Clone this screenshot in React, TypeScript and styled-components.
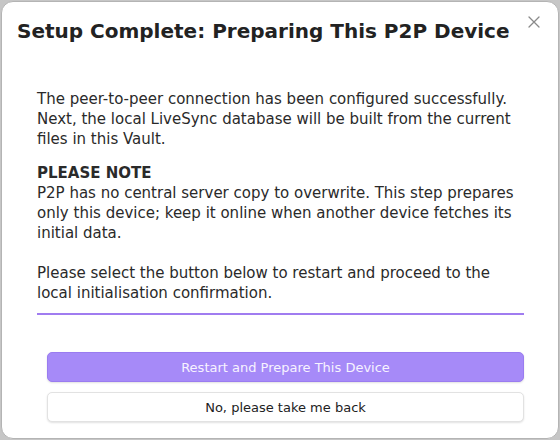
import React from 'react';
import styled, { createGlobalStyle } from 'styled-components';

const GlobalStyle = createGlobalStyle`
	* {
		box-sizing: border-box;
	}
	body {
		margin: 0;
		background: #c6c6c6;
		font-family: 'DejaVu Sans', 'Liberation Sans', sans-serif;
	}
`;

const App: React.FC = () => {
	return (
		<>
			<GlobalStyle />
			<Page>
				<Modal>
					<CloseButton aria-label='Close'>
						<svg width='12' height='12' viewBox='0 0 12 12'>
							<path d='M1 1 L11 11 M11 1 L1 11' stroke='#8a8a8a' strokeWidth='1.3' strokeLinecap='round' />
						</svg>
					</CloseButton>
					<Title>Setup Complete: Preparing This P2P Device</Title>
					<Content>
						<Para>
							The peer-to-peer connection has been configured successfully. Next, the local LiveSync database
							will be built from the current files in this Vault.
						</Para>
						<Note>
							<NoteHead>PLEASE NOTE</NoteHead>
							P2P has no central server copy to overwrite. This step prepares only this device; keep it online
							when another device fetches its initial data.
						</Note>
						<Para $last>
							Please select the button below to restart and proceed to the local initialisation confirmation.
						</Para>
						<Divider />
					</Content>
					<Actions>
						<Button $primary>Restart and Prepare This Device</Button>
						<Button>No, please take me back</Button>
					</Actions>
				</Modal>
			</Page>
		</>
	);
};

export default App;

const Page = styled.div`
	height: 440px;
	padding: 1px;
`;

const Modal = styled.div`
	position: relative;
	width: 558px;
	height: 438px;
	background: #ffffff;
	border: 1px solid #b4b4b4;
	border-radius: 12px;
	padding: 17px 16px 16px 15px;
	display: flex;
	flex-direction: column;
	color: #222222;
`;

const CloseButton = styled.div`
	position: absolute;
	top: 8px;
	right: 12px;
	width: 24px;
	height: 24px;
	display: flex;
	align-items: center;
	justify-content: center;
	cursor: pointer;
`;

const Title = styled.h1`
	margin: 0;
	font-size: 20px;
	line-height: 24px;
	font-weight: 700;
	color: #222222;
`;

const Content = styled.div`
	padding: 46px 18px 0 20px;
	font-size: 15px;
	line-height: 20px;
	color: #2a2a2a;
`;

const Para = styled.p<{ $last?: boolean }>`
	margin: 0 0 ${({ $last }) => ($last ? '10px' : '14px')};
`;

const Note = styled.div`
	margin-bottom: 20px;
`;

const NoteHead = styled.div`
	font-weight: 700;
`;

const Divider = styled.div`
	height: 2px;
	background: #a07cf0;
`;

const Actions = styled.div`
	margin-top: 37px;
	padding: 0 18px 0 30px;
	display: flex;
	flex-direction: column;
	gap: 10px;
`;

const Button = styled.button<{ $primary?: boolean }>`
	height: 30px;
	width: 100%;
	border-radius: 5px;
	font-family: 'DejaVu Sans', 'Liberation Sans', sans-serif;
	font-size: 13px;
	cursor: pointer;
	border: 1px solid ${({ $primary }) => ($primary ? '#9a7cf0' : '#e2e2e2')};
	background: ${({ $primary }) => ($primary ? '#a68af8' : '#ffffff')};
	color: ${({ $primary }) => ($primary ? '#f7f3ff' : '#222222')};
	box-shadow: 0 1px 2px rgba(0, 0, 0, 0.12);
`;
